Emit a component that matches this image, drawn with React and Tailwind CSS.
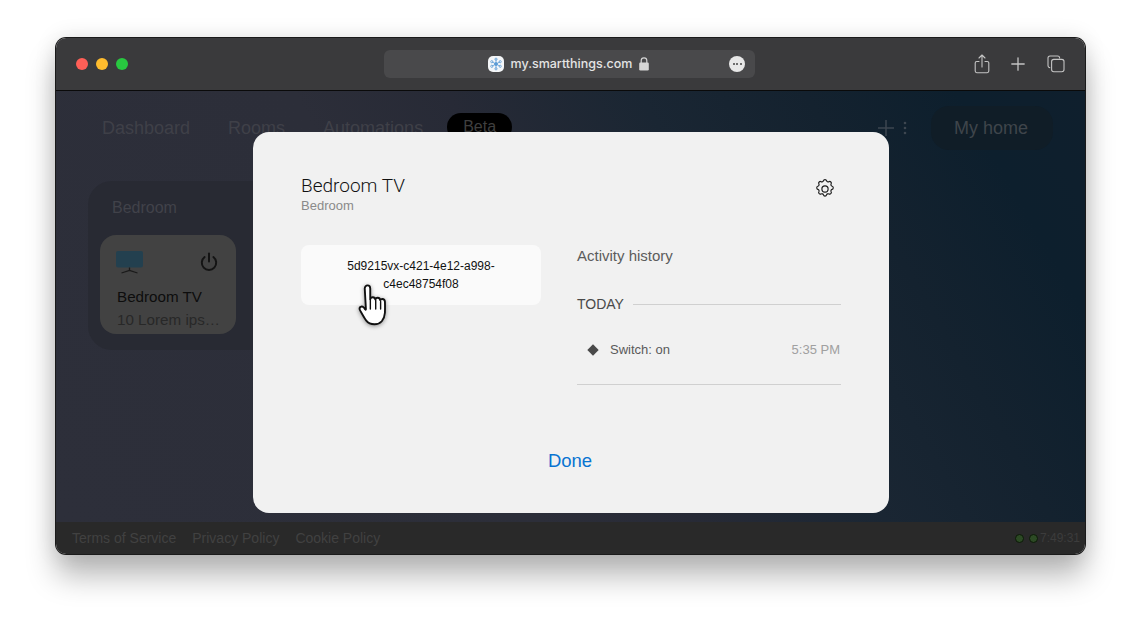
import React from "react";

const SmartThings = () => (
  <svg width="16" height="16" viewBox="0 0 16 16" className="block">
    <rect width="16" height="16" rx="5" fill="#f4f6f8" />
    <g stroke="#5b9bd5" strokeWidth="0.8" fill="none">
      <path d="M8 8L8 3.4M8 8L8 12.6M8 8L4 5.8M8 8L12 5.8M8 8L4 10.2M8 8L12 10.2" />
      <circle cx="8" cy="8" r="1.5" fill="#5b9bd5" />
      <circle cx="8" cy="3.2" r="1.1" />
      <circle cx="8" cy="12.8" r="1.1" />
      <circle cx="3.8" cy="5.7" r="1.1" />
      <circle cx="12.2" cy="5.7" r="1.1" />
      <circle cx="3.8" cy="10.3" r="1.1" />
      <circle cx="12.2" cy="10.3" r="1.1" />
    </g>
  </svg>
);

const Gear = () => (
  <svg width="22" height="22" viewBox="0 0 24 24" fill="none" stroke="#1a1a1a" strokeWidth="1.25" strokeLinecap="round" strokeLinejoin="round">
    <path d="M10.3 2.9c.4-1.6 3-1.6 3.4 0a1.75 1.75 0 0 0 2.6 1.1c1.4-.9 3.3 1 2.4 2.4a1.75 1.75 0 0 0 1.1 2.6c1.6.4 1.6 3 0 3.4a1.75 1.75 0 0 0-1.1 2.6c.9 1.4-1 3.3-2.4 2.4a1.75 1.75 0 0 0-2.6 1.1c-.4 1.6-3 1.6-3.4 0a1.75 1.75 0 0 0-2.6-1.1c-1.4.9-3.3-1-2.4-2.4a1.75 1.75 0 0 0-1.1-2.6c-1.6-.4-1.6-3 0-3.4a1.75 1.75 0 0 0 1.1-2.6c-.9-1.4 1-3.3 2.4-2.4a1.75 1.75 0 0 0 2.6-1.1z" />
    <circle cx="12" cy="12" r="3.4" />
  </svg>
);

const Hand = () => (
  <svg width="35" height="52" viewBox="0 0 30 44" className="block drop-shadow-[0_1px_2px_rgba(0,0,0,0.4)]">
    <path
      d="M7.5 4.5c0-1.6 1-2.7 2.4-2.7s2.3 1.1 2.3 2.7v9.2c.3-1.2 1.2-1.8 2.2-1.8 1.2 0 2 .8 2.2 2 .3-1 1.1-1.5 2-1.5 1.2 0 2 .9 2.2 2.1.3-.7 1-1.1 1.8-1.1 1.3 0 2.1 1 2.2 2.4.1 3.2.1 6.4 0 9.4-.2 3-1.2 5.4-2.7 7.3-1.3 1.5-3.6 2.6-6.3 2.6-3.2 0-5.4-1-7-3.1-1.7-2.3-3.5-5.6-5.2-8.6-.8-1.4-.6-2.6.3-3.2 1-.7 2.2-.3 3 .7l1 1.4c.4.6.6.4.6-.2z"
      fill="#fff"
      stroke="#111"
      strokeWidth="1.6"
      strokeLinejoin="round"
    />
    <path d="M12.3 14v8M16.9 14.5v7.5M21.1 15.5v6.5" stroke="#111" strokeWidth="1.2" strokeLinecap="round" fill="none" />
  </svg>
);

export default function App() {
  return (
    <div className="w-[1141px] h-[628px] bg-white overflow-hidden pt-[38px] pl-[56px] font-['Liberation_Sans',Arial,sans-serif]">
      <div className="relative w-[1029px] h-[516px] rounded-[10px] overflow-hidden flex flex-col shadow-[0_0_0_1px_#1a1a1a,0_22px_30px_rgba(0,0,0,0.28),0_0_22px_rgba(0,0,0,0.12)]">
        <header className="h-[53px] shrink-0 bg-[#3a3a3c] border-b border-[#0a0a0a] flex items-center pl-[20px] pr-[20px] relative">
          <div className="flex gap-2 w-[308px]">
            <span className="w-3 h-3 rounded-full bg-[#ff5f57]" />
            <span className="w-3 h-3 rounded-full bg-[#febc2e]" />
            <span className="w-3 h-3 rounded-full bg-[#28c840]" />
          </div>
          <div className="w-[371px] h-[28px] rounded-[6px] bg-[#49494b] flex items-center relative">
            <div className="flex items-center mx-auto pr-[2px] text-[#e4e4e4]">
              <SmartThings />
              <span className="ml-[7px] font-['Inter',sans-serif] font-medium text-[12.5px]">my.smartthings.com</span>
              <svg width="10" height="14" viewBox="0 0 10 14" className="ml-[7px]">
                <rect x="0.2" y="5.5" width="9.6" height="8" rx="1.3" fill="#d6d6d6" />
                <path d="M2.2 6V3.6a2.8 2.8 0 0 1 5.6 0V6" fill="none" stroke="#d6d6d6" strokeWidth="1.2" />
              </svg>
            </div>
            <div className="absolute right-[10px] top-[6px] w-[16px] h-[16px] rounded-full bg-[#e8e8e8] flex items-center justify-center gap-[1.5px]">
              <span className="w-[2px] h-[2px] rounded-full bg-[#444]" />
              <span className="w-[2px] h-[2px] rounded-full bg-[#444]" />
              <span className="w-[2px] h-[2px] rounded-full bg-[#444]" />
            </div>
          </div>
          <div className="ml-auto flex items-center text-[#c4c4c4]">
            <svg width="16" height="20" viewBox="0 0 16 20" fill="none" stroke="currentColor" strokeWidth="1.1" strokeLinecap="round" strokeLinejoin="round">
              <path d="M5 7.5H2.8a1.6 1.6 0 0 0-1.6 1.6v8a1.6 1.6 0 0 0 1.6 1.6h10.4a1.6 1.6 0 0 0 1.6-1.6v-8a1.6 1.6 0 0 0-1.6-1.6H11" />
              <path d="M8 13V1.2M5 4l3-3 3 3" />
            </svg>
            <svg width="14" height="14" viewBox="0 0 14 14" fill="none" stroke="currentColor" strokeWidth="1.3" strokeLinecap="round" className="ml-[21px]">
              <path d="M7 .8v12.4M.8 7h12.4" />
            </svg>
            <svg width="18" height="18" viewBox="0 0 18 18" fill="none" stroke="currentColor" strokeWidth="1.1" className="ml-[22px]">
              <path d="M3.2 12.6h-.1A2 2 0 0 1 1 10.6V3a2 2 0 0 1 2-2h7.6a2 2 0 0 1 2 2v.4" />
              <rect x="4.6" y="4.4" width="12.4" height="12.4" rx="2.2" />
            </svg>
          </div>
        </header>

        <main className="flex-1 min-h-0 bg-[linear-gradient(60deg,#2d2f3a_0%,#2c2e39_38%,#272a36_50%,#1a2633_65%,#14222f_78%,#0d1f2d_90%,#0f1f2d_100%)] flex flex-col">
          <nav className="h-[60px] shrink-0 flex items-center pl-[46px] pr-[32px] pt-[14px] text-[18px] text-[#3f4048]">
            <span>Dashboard</span>
            <span className="ml-[38px]">Rooms</span>
            <span className="ml-[38px]">Automations</span>
            <span className="ml-[24px] w-[65px] h-[28px] rounded-full bg-black text-[#3f3f3f] text-[16px] flex items-center justify-center mt-[-2px]">Beta</span>
            <svg width="16" height="16" viewBox="0 0 16 16" fill="none" stroke="#3d4650" strokeWidth="1.5" className="ml-auto mr-[9px]">
              <path d="M8 0v16M0 8h16" />
            </svg>
            <svg width="4" height="14" viewBox="0 0 4 14" fill="#3d4650" className="mr-[24px]">
              <circle cx="2" cy="2" r="1.3" />
              <circle cx="2" cy="7" r="1.3" />
              <circle cx="2" cy="12" r="1.3" />
            </svg>
            <span className="w-[122px] h-[44px] rounded-[18px] bg-[#101d27] text-[#3f454b] text-[18px] flex items-center justify-center pr-[2px]">My home</span>
          </nav>

          <section className="ml-[32px] mt-[30px] w-[300px] h-[169px] rounded-[24px] bg-[#282a33] pl-[12px] pt-[17px]">
            <div className="pl-[12px] text-[16px] leading-[20px] text-[#41424a]">Bedroom</div>
            <div className="mt-[17px] w-[136px] h-[99px] rounded-[16px] bg-[#424242] pt-[16px] pl-[16px] pr-[16px]">
              <div className="flex items-start justify-between h-[27px]">
                <svg width="28" height="23" viewBox="0 0 28 23">
                  <rect x="0" y="0" width="27" height="16.5" rx="2" fill="#23404f" />
                  <path d="M13.5 16.5v3M5.5 22l8-2.5 8 2.5" stroke="#1a1a1a" strokeWidth="1.3" fill="none" />
                </svg>
                <svg width="18" height="20" viewBox="0 0 18 20" fill="none" stroke="#141414" strokeWidth="2" strokeLinecap="round" className="mt-px -translate-x-[2px]">
                  <path d="M9 1.5v8" />
                  <path d="M4.6 5a7.2 7.2 0 1 0 8.8 0" />
                </svg>
              </div>
              <div className="mt-[10px] text-[15.2px] leading-[18px] text-[#0d0d0d] whitespace-nowrap ml-px">Bedroom TV</div>
              <div className="mt-[5px] text-[15.2px] leading-[18px] text-[#282828] whitespace-nowrap ml-px">10 Lorem ips…</div>
            </div>
          </section>
        </main>

        <footer className="h-[32px] shrink-0 bg-[#292929] flex items-center pl-[16px] pr-[5px] text-[14px] text-[#414141]">
          <span>Terms of Service</span>
          <span className="ml-[16px]">Privacy Policy</span>
          <span className="ml-[16px]">Cookie Policy</span>
          <span className="ml-auto w-[9px] h-[9px] rounded-full bg-[#2c4a24] border border-[#0c1a08]" />
          <span className="ml-[5px] w-[9px] h-[9px] rounded-full bg-[#2c4a24] border border-[#0c1a08]" />
          <span className="text-[#3c3c3c] text-[12px] ml-[2px]">7:49:31</span>
        </footer>

        <div className="absolute left-[197px] top-[94px] w-[636px] h-[381px] rounded-[16px] bg-[#f1f1f1] px-[48px] pt-[43px] flex flex-col">
          <div className="flex justify-between">
            <div>
              <div className="text-[19px] leading-[22px] text-[#111] font-['Roboto',sans-serif] font-light">Bedroom TV</div>
              <div className="text-[13px] leading-[18px] text-[#8a8a8a]">Bedroom</div>
            </div>
            <div className="mr-[5px] mt-[3px]"><Gear /></div>
          </div>
          <div className="flex mt-[30px]">
            <div className="w-[240px] h-[60px] rounded-[8px] bg-[#fafafa] flex items-center justify-center text-center text-[12px] leading-[18px] text-[#111] px-[20px]">
              5d9215vx-c421-4e12-a998-c4ec48754f08
            </div>
            <div className="ml-[36px] w-[264px]">
              <div className="text-[15px] leading-[20px] text-[#5c5c5c] mt-px">Activity history</div>
              <div className="flex items-center mt-[28px]">
                <span className="text-[14px] leading-[20px] text-[#4a4a4a]">TODAY</span>
                <span className="flex-1 h-px bg-[#d0d0d0] ml-[9px]" />
              </div>
              <div className="flex items-center mt-[26px] h-[20px] pl-[12px]">
                <span className="w-[8px] h-[8px] bg-[#4a4a4a] rotate-45" />
                <span className="ml-[13px] text-[13px] text-[#5a5a5a]">Switch: on</span>
                <span className="ml-auto text-[13px] text-[#a0a0a0] pr-px">5:35 PM</span>
              </div>
              <div className="h-px bg-[#d0d0d0] mt-[24px]" />
            </div>
          </div>
          <div className="mt-[auto] mb-[42px] text-center text-[18.5px] leading-[20px] text-[#0874d1] -translate-x-px">Done</div>
        </div>

        <div className="absolute left-[300px] top-[245px]"><Hand /></div>
      </div>
    </div>
  );
}
